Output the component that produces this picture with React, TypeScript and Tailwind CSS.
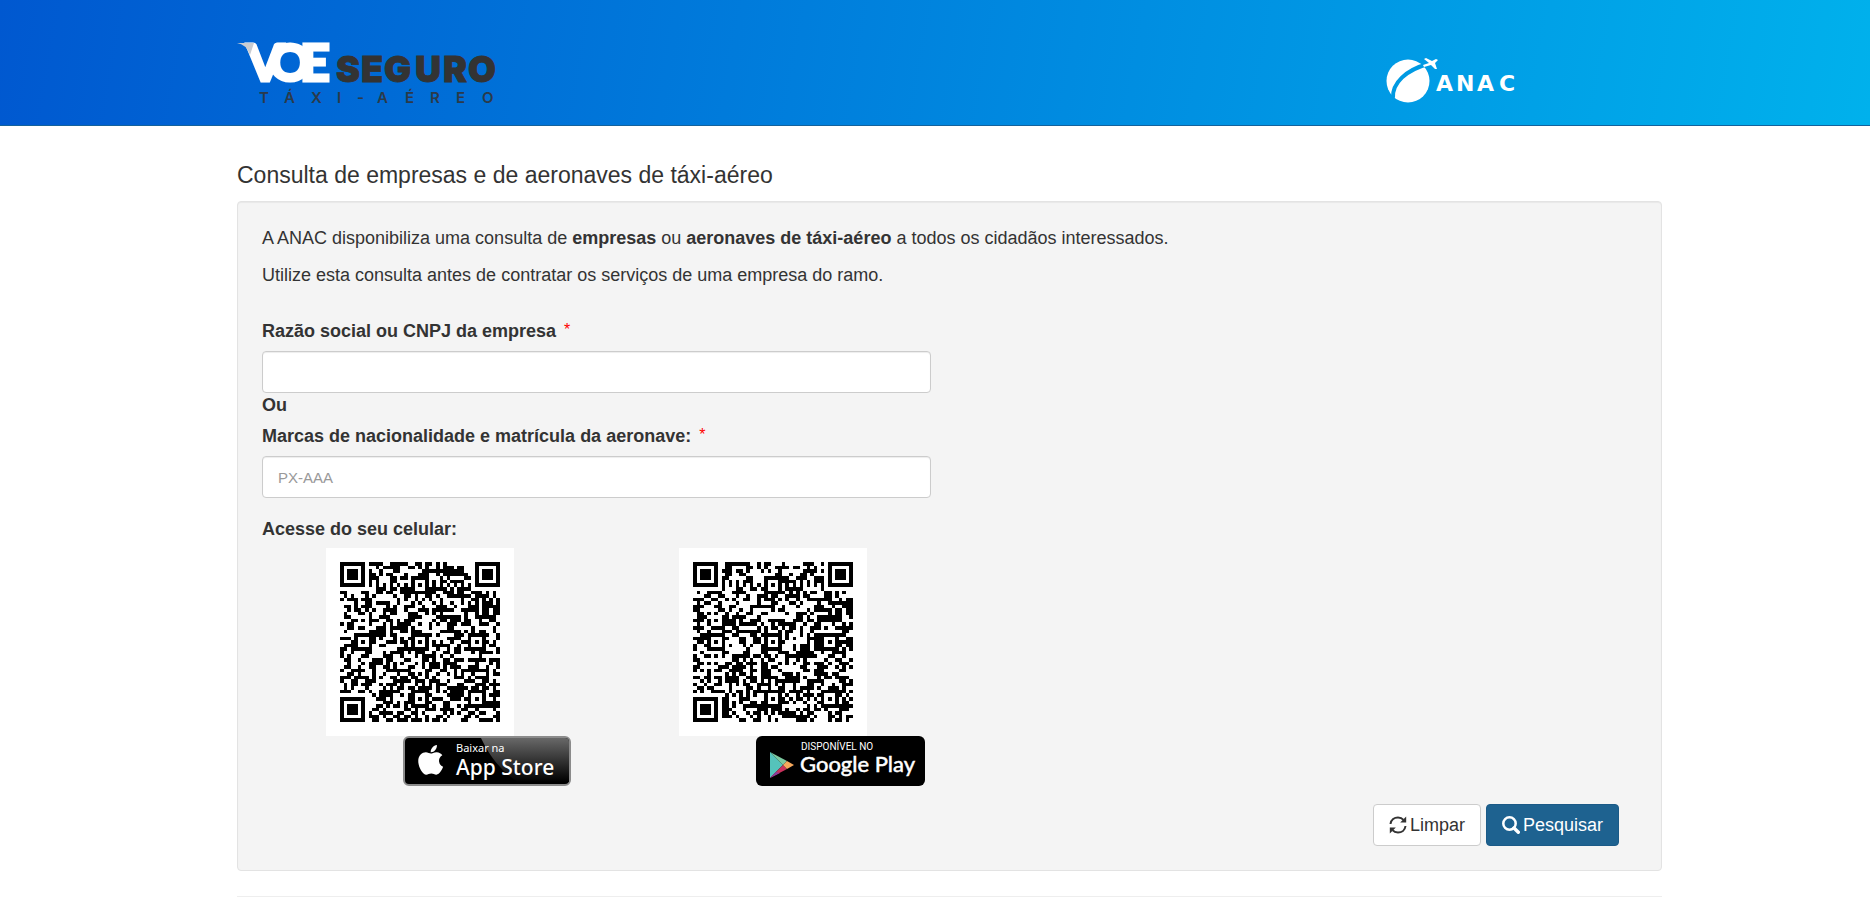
import type { ReactNode } from "react";

const QR_SIZE = 45;

// Finder pattern at (left, top), null when the module is outside of it
function finder(x: number, y: number, left: number, top: number) {
  const dx = Math.abs(x - left - 3);
  const dy = Math.abs(y - top - 3);
  const d = Math.max(dx, dy);
  if (d > 4) return null;
  return d === 3 || d <= 1;
}

function isDark(x: number, y: number, noise: () => number) {
  const random = noise() > 0.5;
  const last = QR_SIZE - 7;
  for (const [fx, fy] of [[0, 0], [last, 0], [0, last]]) {
    const value = finder(x, y, fx, fy);
    if (value !== null) return value;
  }
  for (const [ax, ay] of [[22, 6], [6, 22], [22, 22], [38, 22], [22, 38], [38, 38]]) {
    const d = Math.max(Math.abs(x - ax), Math.abs(y - ay));
    if (d <= 2) return d !== 1;
  }
  if (y === 6) return x % 2 === 0;
  if (x === 6) return y % 2 === 0;
  return random;
}

function QrCode({ seed, label }: { seed: number; label: string }) {
  let state = seed;
  const noise = () => {
    state = (state * 1664525 + 1013904223) % 4294967296;
    return state / 4294967296;
  };

  let path = "";
  for (let y = 0; y < QR_SIZE; y++) {
    for (let x = 0; x < QR_SIZE; x++) {
      if (isDark(x, y, noise)) path += `M${x + 4} ${y + 4}h1v1h-1z`;
    }
  }

  return (
    <svg viewBox="0 0 53 53" className="size-[188px] bg-white" role="img" aria-label={label} shapeRendering="crispEdges">
      <path d={path} fill="#000" />
    </svg>
  );
}

function VoeSeguroLogo() {
  return (
    <svg width="264" height="70" viewBox="0 0 264 70" className="overflow-visible" role="img" aria-label="Voe Seguro Táxi-Aéreo">
      <text
        x="10 32 63"
        y="45"
        fill="#fff"
        stroke="#fff"
        strokeWidth="3"
        fontFamily="Lato, sans-serif"
        fontWeight="900"
        fontSize="52"
      >
        VOE
      </text>
      <path d="M0 7 Q9 8 13 19 L17 7 Z" fill="#c9ccd1" />
      <text
        x="99 124 147 178 206 231"
        y="46"
        fill="#333"
        stroke="#333"
        strokeWidth="0.800"
        fontFamily="Inter, sans-serif"
        fontWeight="900"
        fontSize="36"
      >
        SEGURO
      </text>
      <text
        x="22 47 74 100 120 140 168 193 219 245"
        y="67"
        fill="#2b3a4a"
        fontFamily="Inter, sans-serif"
        fontWeight="600"
        fontSize="15"
      >
        TÁXI-AÉREO
      </text>
    </svg>
  );
}

function AnacLogo() {
  return (
    <svg width="134" height="50" viewBox="0 0 134 50" role="img" aria-label="ANAC">
      <circle cx="22" cy="26" r="21.5" fill="#fff" />
      <path d="M7 43 C6 28 20 15 42 9" fill="none" stroke="#009ae3" strokeWidth="4" />
      <path
        d="M37 10 L43 8 L38 4 L40 3 L46 6 L50 4 L52 5 L49 8 L51 14 L49 14 L45 10 L38 12 Z"
        fill="#fff"
      />
      <text
        x="50 70 91 113"
        y="36"
        fill="#fff"
        fontFamily="DejaVu Sans, sans-serif"
        fontWeight="700"
        fontSize="22"
      >
        ANAC
      </text>
    </svg>
  );
}

function AppStoreBadge() {
  return (
    <svg width="168" height="50" viewBox="0 0 168 50" role="img" aria-label="Baixar na App Store">
      <defs>
        <linearGradient id="gloss" x1="0" y1="0" x2="0" y2="1">
          <stop offset="0" stopColor="#686868" />
          <stop offset="1" stopColor="#000" />
        </linearGradient>
      </defs>
      <rect x="1" y="1" width="166" height="48" rx="5" fill="#000" stroke="#8b8b8b" strokeWidth="2" />
      <path d="M78 2 H162 Q166 2 166 6 V46 H115 Q92 32 78 2 Z" fill="url(#gloss)" />
      <g transform="translate(15 7) scale(0.066)">
        <path
          d="M318.700 268.700c-.2-36.700 16.400-64.400 50-84.800-18.800-26.900-47.200-41.700-84.700-44.600-35.500-2.800-74.300 20.700-88.500 20.700-15 0-49.400-19.700-76.400-19.700C63.300 141.200 4 184.800 4 273.500q0 39.300 14.400 81.200c12.800 36.700 59 126.700 107.200 125.200 25.200-.6 43-17.900 75.800-17.900 31.800 0 48.300 17.900 76.400 17.900 48.600-.7 90.400-82.500 102.600-119.300-65.200-30.700-61.700-90-61.700-91.900zm-56.600-164.200c27.300-32.400 24.800-61.900 24-72.500-24.100 1.400-52 16.400-67.900 34.900-17.500 19.800-27.800 44.300-25.600 71.900 26.100 2 49.900-11.400 69.500-34.300z"
          fill="#fff"
        />
      </g>
      <text x="53" y="16" fill="#fff" fontFamily="Noto Sans, sans-serif" fontSize="11">Baixar na</text>
      <text x="53" y="39" fill="#fff" fontFamily="Noto Sans, sans-serif" fontWeight="500" fontSize="21">App Store</text>
    </svg>
  );
}

function GooglePlayBadge() {
  return (
    <svg width="169" height="50" viewBox="0 0 169 50" role="img" aria-label="Disponível no Google Play">
      <rect width="169" height="50" rx="6" fill="#000" />
      <path d="M14 16 L14 42 L27 29 Z" fill="#55c3bb" />
      <path d="M14 16 L31 25 L27 29 Z" fill="#7cc9a0" />
      <path d="M14 42 L31 33 L27 29 Z" fill="#c8315c" />
      <path d="M14 42 L20 36 L24 37 Z" fill="#8d3b9a" />
      <path d="M31 25 L38 29 L31 33 L27 29 Z" fill="#f6a85c" />
      <text x="45" y="14" fill="#fff" fontFamily="Roboto, sans-serif" fontSize="10">DISPONÍVEL NO</text>
      <text x="44" y="36" fill="#fff" stroke="#fff" strokeWidth="0.500" fontFamily="Lato, sans-serif" fontSize="22">Google Play</text>
    </svg>
  );
}

function RefreshIcon() {
  return (
    <svg width="18" height="18" viewBox="0 0 18 18" fill="none" aria-hidden="true">
      <path d="M1.500 8 C2 3.500 5.500 1.500 9 1.500 C11.500 1.500 13.300 2.400 14.500 3.800" stroke="currentColor" strokeWidth="2" />
      <path d="M17.200 0.500 V6.500 H11.200 Z" fill="currentColor" />
      <path d="M16.500 10 C16 14.500 12.500 16.500 9 16.500 C6.500 16.500 4.700 15.600 3.500 14.200" stroke="currentColor" strokeWidth="2" />
      <path d="M0.800 17.500 V11.500 H6.800 Z" fill="currentColor" />
    </svg>
  );
}

function SearchIcon() {
  return (
    <svg width="18" height="18" viewBox="0 0 18 18" fill="none" aria-hidden="true">
      <circle cx="7.500" cy="7.500" r="6.200" stroke="currentColor" strokeWidth="2.500" />
      <path d="M12 12 L16.300 16.300" stroke="currentColor" strokeWidth="3.400" strokeLinecap="round" />
    </svg>
  );
}

function Field({ id, label, placeholder }: { id: string; label: ReactNode; placeholder?: string }) {
  return (
    <div className="max-w-[669px]">
      <label htmlFor={id} className="mb-[7px] flex items-start gap-2 font-bold leading-[26px]">
        {label}
        <span className="text-base font-normal leading-6 text-[#ff0000]">*</span>
      </label>
      <input
        id={id}
        type="text"
        placeholder={placeholder}
        className="block h-[42px] w-full rounded border border-[#ccc] bg-white px-[15px] text-[15px] shadow-[inset_0_1px_1px_rgba(0,0,0,0.075)] outline-none placeholder:text-[#999] focus:border-[#66afe9]"
      />
    </div>
  );
}

export default function App() {
  return (
    <div className="bg-white font-['Liberation_Sans',Arial,sans-serif] text-lg text-[#333]">
      {/* Header */}
      <header className="border-b border-[#14629c] bg-linear-[100deg] from-[#0058d0] to-[#00b1ec]">
        <div className="mx-auto flex h-[125px] max-w-[1454px] justify-between pl-[29px] pr-[142px]">
          <a href="#" className="mt-9">
            <VoeSeguroLogo />
          </a>
          <a href="#" className="mt-[55px]">
            <AnacLogo />
          </a>
        </div>
      </header>

      <main className="mx-auto max-w-[1454px] pl-[29px]">
        <h1 className="pt-[35px] text-[23px] leading-7">Consulta de empresas e de aeronaves de táxi-aéreo</h1>

        {/* Search form */}
        <form
          onSubmit={(e) => e.preventDefault()}
          className="mt-3 rounded border border-[#e3e3e3] bg-[#f4f4f4] px-6 pb-6 pt-[23px] shadow-[inset_0_1px_1px_rgba(0,0,0,0.05)]"
        >
          <p className="mb-[11px] leading-[26px]">
            A ANAC disponibiliza uma consulta de <strong>empresas</strong> ou <strong>aeronaves de táxi-aéreo</strong> a
            todos os cidadãos interessados.
          </p>
          <p className="mb-[30px] leading-[26px]">
            Utilize esta consulta antes de contratar os serviços de uma empresa do ramo.
          </p>

          <Field id="empresa" label="Razão social ou CNPJ da empresa" />
          <p className="mb-[6px] font-bold leading-6">Ou</p>
          <Field id="aeronave" label="Marcas de nacionalidade e matrícula da aeronave:" placeholder="PX-AAA" />

          {/* Mobile apps */}
          <p className="mb-[6px] mt-[18px] font-bold leading-[26px]">Acesse do seu celular:</p>
          <div className="grid max-w-[706px] grid-cols-2">
            <div className="flex flex-col items-start pl-16">
              <QrCode seed={20417} label="QR Code App Store" />
              <a href="#" className="ml-[77px]">
                <AppStoreBadge />
              </a>
            </div>
            <div className="flex flex-col items-start pl-16">
              <QrCode seed={98231} label="QR Code Google Play" />
              <a href="#" className="ml-[77px]">
                <GooglePlayBadge />
              </a>
            </div>
          </div>

          <div className="mt-[18px] flex justify-end gap-[5px] pr-[18px]">
            <button
              type="reset"
              className="flex h-[42px] items-center gap-[3px] rounded border border-[#ccc] bg-white px-[15px] hover:bg-[#e6e6e6]"
            >
              <RefreshIcon />
              Limpar
            </button>
            <button
              type="submit"
              className="flex h-[42px] items-center gap-[3px] rounded border border-[#1b5a87] bg-[#1e6290] px-[15px] text-white hover:bg-[#174c70]"
            >
              <SearchIcon />
              Pesquisar
            </button>
          </div>
        </form>

        <hr className="mt-[25px] border-[#eee]" />
      </main>
    </div>
  );
}
